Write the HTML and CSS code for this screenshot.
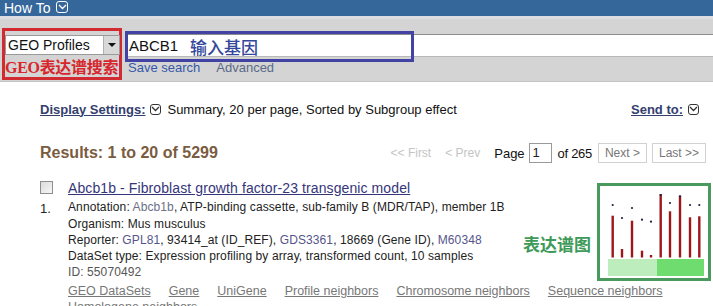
FILE: index.html
```html
<!DOCTYPE html>
<html lang="en">
<head>
  <meta charset="UTF-8">
  <title>GEO Profiles - ABCB1</title>
  <link rel="stylesheet" href="styles.css">
</head>
<body>

  <!-- Top bar -->
  <div class="topbar">
    <span class="topbar-title">How To</span>
    <span class="drop-icon light">
      <svg width="9" height="6" viewBox="0 0 9 6"><path d="M1 1 L4.5 4.5 L8 1" fill="none" stroke="currentColor" stroke-width="1.3"/></svg>
    </span>
  </div>

  <!-- Search band -->
  <div class="search-band">
    <div class="db-pick">
      <div class="select">
        <span class="select-text">GEO Profiles</span>
        <span class="select-arrow"></span>
      </div>
      <div class="note-red"><span class="latin">GEO</span>表达谱搜索</div>
    </div>

    <div class="search-col">
      <div class="term">
        <span class="term-text">ABCB1</span>
        <div class="mark-blue"><span class="note-blue">输入基因</span></div>
      </div>
      <div class="search-links">
        <a href="#" class="save">Save search</a>
        <a href="#" class="advanced">Advanced</a>
      </div>
    </div>
  </div>

  <!-- Results -->
  <div class="content">
    <div class="settings-row">
      <div class="settings-left">
        <a href="#" class="strong-link">Display Settings:</a>
        <span class="drop-icon"><svg width="9" height="6" viewBox="0 0 9 6"><path d="M1 1 L4.5 4.5 L8 1" fill="none" stroke="currentColor" stroke-width="1.3"/></svg></span>
        <span class="settings-text">Summary, 20 per page, Sorted by Subgroup effect</span>
      </div>
      <div class="settings-right">
        <a href="#" class="strong-link">Send to:</a>
        <span class="drop-icon"><svg width="9" height="6" viewBox="0 0 9 6"><path d="M1 1 L4.5 4.5 L8 1" fill="none" stroke="currentColor" stroke-width="1.3"/></svg></span>
      </div>
    </div>

    <div class="results-row">
      <h3 class="results-title">Results: 1 to 20 of 5299</h3>
      <div class="pager">
        <span class="pager-off">&lt;&lt; First</span>
        <span class="pager-off">&lt; Prev</span>
        <span class="pager-page">Page</span>
        <span class="page-box">1</span>
        <span class="pager-of">of 265</span>
        <span class="pager-btn">Next &gt;</span>
        <span class="pager-btn">Last &gt;&gt;</span>
      </div>
    </div>

    <div class="result">
      <div class="result-gutter">
        <span class="checkbox"></span>
        <span class="result-num">1.</span>
      </div>
      <div class="result-body">
        <a href="#" class="result-title">Abcb1b - Fibroblast growth factor-23 transgenic model</a>
        <div class="result-details">
          <div>Annotation: <span class="soft">Abcb1b</span>, ATP-binding cassette, sub-family B (MDR/TAP), member 1B</div>
          <div>Organism: Mus musculus</div>
          <div>Reporter: <a href="#" class="inline-link">GPL81</a>, 93414_at (ID_REF), <a href="#" class="inline-link">GDS3361</a>, 18669 (Gene ID), <a href="#" class="inline-link">M60348</a></div>
          <div>DataSet type: Expression profiling by array, transformed count, 10 samples</div>
          <div class="result-id">ID: 55070492</div>
        </div>

        <div class="chart-cell">
          <span class="note-green">表达谱图</span>
          <div class="chart">
            <svg width="108" height="92" viewBox="0 0 108 92">
              <rect x="8" y="73" width="49" height="17" fill="#bdedbd"/>
              <rect x="57" y="73" width="47" height="17" fill="#6fdc70"/>
              <g stroke="#9c161c" stroke-width="2.4">
                <line x1="12.7" y1="29.7" x2="12.7" y2="71.5"/>
                <line x1="22" y1="63" x2="22" y2="71.5"/>
                <line x1="32" y1="34.7" x2="32" y2="71.5"/>
                <line x1="42" y1="64.7" x2="42" y2="71.5"/>
                <line x1="51" y1="69" x2="51" y2="71.5"/>
                <line x1="60.7" y1="8" x2="60.7" y2="71.5"/>
                <line x1="70" y1="25.3" x2="70" y2="71.5"/>
                <line x1="80" y1="9.7" x2="80" y2="71.5"/>
                <line x1="90" y1="31.3" x2="90" y2="71.5"/>
                <line x1="99.3" y1="30.3" x2="99.3" y2="71.5"/>
              </g>
              <g fill="#1c2040">
                <circle cx="12.7" cy="19" r="1.1"/>
                <circle cx="22" cy="32" r="1.1"/>
                <circle cx="32" cy="22" r="1.1"/>
                <circle cx="42" cy="33.7" r="1.1"/>
                <circle cx="51" cy="35.7" r="1.1"/>
                <circle cx="60.7" cy="9" r="1.1"/>
                <circle cx="70" cy="17" r="1.1"/>
                <circle cx="80" cy="10.3" r="1.1"/>
                <circle cx="90" cy="19" r="1.1"/>
                <circle cx="99.3" cy="19" r="1.1"/>
              </g>
            </svg>
          </div>
        </div>

        <div class="result-links">
          <a href="#">GEO DataSets</a>
          <a href="#">Gene</a>
          <a href="#">UniGene</a>
          <a href="#">Profile neighbors</a>
          <a href="#">Chromosome neighbors</a>
          <a href="#">Sequence neighbors</a>
          <a href="#">Homologene neighbors</a>
        </div>
      </div>
    </div>
  </div>

</body>
</html>
```

FILE: styles.css
```css
/* General */
body {
  margin: 0;
  font-family: "Liberation Sans", Arial, sans-serif;
  font-size: 12px;
  color: #222;
  background: #fff;
  width: 713px;
  height: 306px;
  overflow: hidden;
}

a {
  text-decoration: none;
}

/* Top bar */
.topbar {
  height: 16px;
  background: #35679a;
  display: flex;
  align-items: center;
  padding-left: 4px;
  gap: 6px;
}

.topbar-title {
  color: #fff;
  font-size: 14px;
  line-height: 16px;
}

.drop-icon {
  width: 11px;
  height: 11px;
  border: 1px solid #333;
  border-radius: 3px;
  display: inline-flex;
  align-items: center;
  justify-content: center;
  color: #333;
  box-sizing: border-box;
}

.drop-icon.light {
  width: 12px;
  height: 12px;
  border-color: #fff;
  color: #fff;
  margin-top: -2px;
}

/* Search band */
.search-band {
  height: 66px;
  background: #d4d4d4;
  border-top: 3px solid #dddddf;
  border-bottom: 1px solid #c4c4c4;
  box-sizing: border-box;
  display: flex;
  padding: 9px 0 0 2px;
  gap: 3px;
}

.db-pick {
  width: 120px;
  height: 52px;
  border: 3px solid #d12a30;
  box-sizing: border-box;
  padding-top: 4px;
}

.select {
  width: 115px;
  height: 20px;
  background: #fff;
  border: 1px solid #9a9a9a;
  box-sizing: border-box;
  display: flex;
  align-items: center;
}

.select-text {
  flex: 1;
  font-size: 14px;
  padding-left: 2px;
  color: #111;
}

.select-arrow {
  width: 15px;
  height: 18px;
  background: #d8d8d8;
  border-left: 1px solid #b0b0b0;
  position: relative;
}

.select-arrow::after {
  content: "";
  position: absolute;
  left: 4px;
  top: 7px;
  border-left: 4px solid transparent;
  border-right: 4px solid transparent;
  border-top: 4px solid #111;
}

.note-red {
  color: #d7262c;
  font-family: "Noto Sans CJK SC", sans-serif;
  font-weight: 700;
  font-size: 16px;
  line-height: 22px;
  letter-spacing: -0.3px;
}

.note-red .latin {
  font-family: "Liberation Serif", serif;
}

.search-col {
  flex: 1;
  padding-top: 6px;
}

.term {
  height: 23px;
  background: #fff;
  border-top: 1px solid #8e8e8e;
  border-bottom: 1px solid #b8b8b8;
  box-sizing: border-box;
  position: relative;
  display: flex;
  align-items: center;
  padding-left: 4px;
}

.term-text {
  font-size: 15px;
  color: #111;
}

.mark-blue {
  position: absolute;
  left: 0;
  top: -4px;
  width: 289px;
  height: 31px;
  border: 3px solid #4343a6;
  box-sizing: border-box;
  padding-left: 62px;
  display: flex;
  align-items: center;
}

.note-blue {
  color: #34479a;
  font-family: "Noto Sans CJK SC", sans-serif;
  font-size: 17px;
  font-weight: 500;
}

.search-links {
  display: flex;
  gap: 16px;
  padding: 3px 0 0 3px;
  font-size: 13px;
}

.save {
  color: #3558a8;
}

.advanced {
  color: #5a6a8a;
}

/* Content */
.content {
  padding: 19px 0 0 40px;
}

.settings-row {
  display: flex;
  justify-content: space-between;
  align-items: center;
  padding-right: 14px;
  height: 16px;
  font-size: 13px;
}

.settings-left, .settings-right {
  display: flex;
  align-items: center;
  gap: 5px;
}

.strong-link {
  color: #33406e;
  font-weight: 700;
  text-decoration: underline;
}

.settings-text {
  color: #111;
  margin-left: 1px;
}

.results-row {
  display: flex;
  justify-content: space-between;
  align-items: center;
  margin-top: 26px;
  padding-right: 7px;
  height: 20px;
}

.results-title {
  margin: 0;
  font-size: 16px;
  color: #7a5c40;
}

.pager {
  display: flex;
  align-items: center;
  font-size: 12px;
}

.pager-off {
  color: #c4c4c4;
  margin-right: 14px;
}

.pager-page {
  color: #111;
  font-size: 13px;
  margin-right: 4px;
}

.page-box {
  width: 23px;
  height: 20px;
  border: 1px solid #9a9a9a;
  box-sizing: border-box;
  font-size: 13px;
  padding-left: 3px;
  line-height: 18px;
  margin-right: 6px;
}

.pager-of {
  color: #111;
  font-size: 13px;
  margin-right: 1px;
  letter-spacing: -0.3px;
}

.pager-btn {
  height: 20px;
  border: 1px solid #d2d2d2;
  box-sizing: border-box;
  padding: 0 6px;
  line-height: 18px;
  color: #777;
  font-size: 12px;
  margin-left: 5px;
}

/* Result item */
.result {
  display: flex;
  margin-top: 17px;
}

.result-gutter {
  width: 28px;
  display: flex;
  flex-direction: column;
  gap: 7px;
  padding-top: 1px;
}

.checkbox {
  width: 13px;
  height: 13px;
  border: 1px solid #8e8e8e;
  background: linear-gradient(135deg, #dcdcdc, #f6f6f6);
  box-sizing: border-box;
}

.result-num {
  font-size: 13px;
  color: #222;
}

.result-body {
  flex: 1;
  display: grid;
  grid-template-columns: 1fr auto;
  grid-template-rows: auto auto auto;
}

.result-title {
  grid-column: 1;
  grid-row: 1;
  font-size: 14px;
  line-height: 16px;
  letter-spacing: 0.1px;
  color: #35357a;
  text-decoration: underline;
}

.result-details {
  grid-column: 1;
  grid-row: 2;
  margin-top: 3px;
  line-height: 16.3px;
  letter-spacing: 0.1px;
  color: #222;
}

.soft {
  color: #6c7088;
}

.inline-link {
  color: #55558a;
}

.result-id {
  color: #555;
}

.chart-cell {
  grid-column: 2;
  grid-row: 1 / 3;
  position: relative;
  margin-top: 3px;
}

.note-green {
  position: absolute;
  right: 122px;
  top: 48px;
  color: #3e9a58;
  font-family: "Noto Sans CJK SC", sans-serif;
  font-weight: 700;
  font-size: 17px;
  white-space: nowrap;
}

.chart {
  width: 114px;
  height: 98px;
  border: 3px solid #4a9a5e;
  box-sizing: border-box;
  background: #fff;
  margin-right: 2px;
}

.chart svg {
  display: block;
}

.result-links {
  grid-column: 1 / 3;
  grid-row: 3;
  display: flex;
  flex-wrap: wrap;
  column-gap: 18px;
  margin-top: 2px;
  line-height: 16px;
  font-size: 12.5px;
}

.result-links a {
  color: #777;
  text-decoration: underline;
}
```
